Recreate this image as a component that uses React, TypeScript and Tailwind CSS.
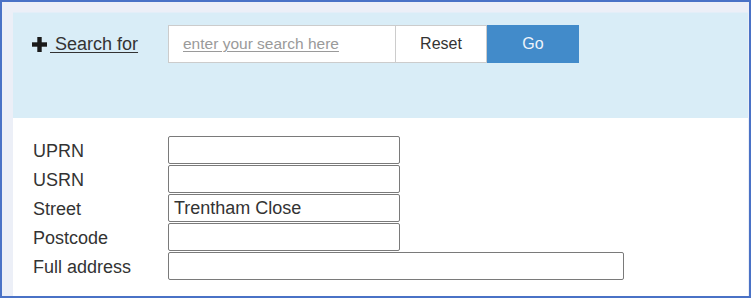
import React from "react";

const font = { fontFamily: '"Liberation Sans", Arial, sans-serif' };

function Row({ label, value, wide }: { label: string; value?: string; wide?: boolean }) {
  return (
    <div className="flex h-[29px] items-start">
      <div className="w-[135px] h-[29px] flex items-center text-[18px] text-[#333333] leading-none">{label}</div>
      <div
        className={`${wide ? "w-[456px]" : "w-[232px]"} h-[28px] border border-[#7a7a7a] rounded-[2px] bg-white flex items-center pl-[5px] text-[18px] text-[#333333] leading-none`}
      >
        {value}
      </div>
    </div>
  );
}

export default function App() {
  return (
    <div style={font} className="w-[751px] h-[301px] bg-white">
      <div className="w-[751px] h-[298px] border-2 border-[#4a72c6] bg-[#eceff7] pl-[11px] pt-[10px] pr-[1px] flex flex-col">
        <div className="h-[106px] bg-[#d9edf7] pt-[12px] pl-[19px] border-t border-[#e3eef8]">
          <div className="flex items-start">
            <a className="w-[136px] h-[38px] flex items-center text-[18px] text-[#333333] underline decoration-1 underline-offset-2 cursor-pointer leading-none">
              <svg width="15" height="15" viewBox="0 0 15 15" className="shrink-0 w-[15px] h-[15px]">
                <rect x="0" y="5.3" width="15" height="4.4" fill="#1a1a1a" />
                <rect x="5.3" y="0" width="4.4" height="15" fill="#1a1a1a" />
              </svg>
              <span className="pl-[3px]">&nbsp;Search for</span>
            </a>
            <div className="w-[228px] h-[38px] bg-white border border-[#cccccc] flex items-center pl-[14px]">
              <span className="text-[15.5px] text-[#9a9a9a] underline decoration-1 underline-offset-2 leading-none">
                enter your search here
              </span>
            </div>
            <div className="w-[91px] h-[38px] bg-white border border-l-0 border-[#cccccc] flex items-center justify-center text-[16px] text-[#333333] leading-none">
              Reset
            </div>
            <div className="w-[92px] h-[38px] bg-[#428bca] flex items-center justify-center text-[16px] text-[#eef4fb] leading-none">
              Go
            </div>
          </div>
        </div>
        <div className="flex-1 bg-white pt-[18px] pl-[20px]">
          <Row label="UPRN" />
          <Row label="USRN" />
          <Row label="Street" value="Trentham Close" />
          <Row label="Postcode" />
          <Row label="Full address" wide />
        </div>
      </div>
    </div>
  );
}
